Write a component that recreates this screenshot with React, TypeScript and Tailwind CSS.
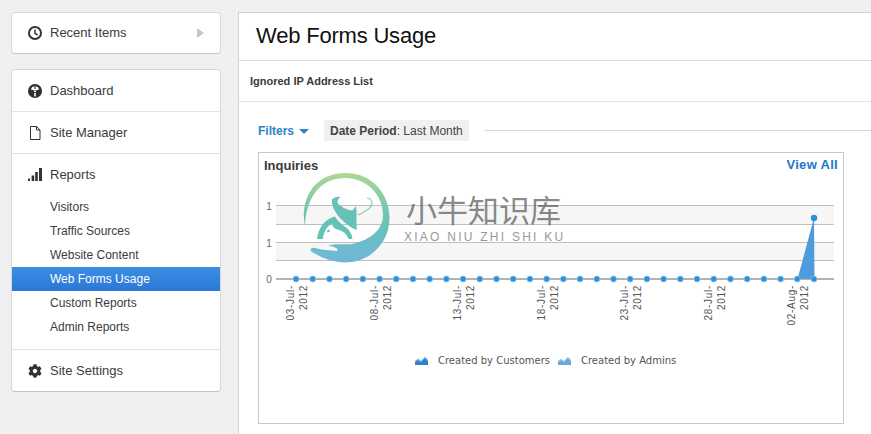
import { FaCog } from "react-icons/fa";

const subItems = ["Visitors", "Traffic Sources", "Website Content", "Web Forms Usage", "Custom Reports", "Admin Reports"];
const dates = ["03-Jul-", "08-Jul-", "13-Jul-", "18-Jul-", "23-Jul-", "28-Jul-", "02-Aug-"];
const points = Array.from({ length: 32 }, (_, i) => 296 + i * 16.71);

function ClockIcon() {
  return (
    <svg width="14" height="14" viewBox="0 0 14 14" fill="none" stroke="#333">
      <circle cx="7" cy="7" r="6" strokeWidth="2" />
      <path d="M7 3.4V7.4L9.6 9" strokeWidth="1.5" />
    </svg>
  );
}

function DashboardIcon() {
  return (
    <svg width="14" height="14" viewBox="0 0 14 14">
      <circle cx="7" cy="7" r="7" fill="#2e2e2e" />
      <path d="M3 5.4C3.4 3.4 5 2.2 7 2.2s3.6 1.2 4 3.2L8.4 6.2H5.6Z" fill="#fff" />
      <path d="M6.5 2h1L7.6 5H6.4Z" fill="#2e2e2e" />
      <rect x="6" y="6.6" width="2" height="1.5" fill="#fff" />
      <rect x="6.2" y="9" width="1.6" height="3.4" fill="#fff" />
    </svg>
  );
}

function FileIcon() {
  return (
    <svg width="14" height="14" viewBox="0 0 14 14" fill="none" stroke="#333" strokeWidth="1">
      <path d="M2.5.5H8.5L12 4V13.5H2.5Z" />
      <path d="M8.5.5V4H12" />
    </svg>
  );
}

function BarsIcon() {
  return (
    <svg width="14" height="13" viewBox="0 0 14 13" fill="#333">
      <rect x="0" y="10.5" width="2" height="2.5" />
      <rect x="3.6" y="7.5" width="2.6" height="5.5" />
      <rect x="7.2" y="4" width="2.6" height="9" />
      <rect x="11" y="0" width="3" height="13" />
    </svg>
  );
}

function LegendIcon({ color }: { color: string }) {
  return (
    <svg width="13" height="8" viewBox="0 0 13 8">
      <path d="M0 8V4l3-2 3 2 4-4 3 3v5z" fill={color} />
      <path d="M0 5l3-2 3 2 4-4 3 3" fill="none" stroke="#fff" strokeOpacity="0.35" />
    </svg>
  );
}

function Row({ icon, label }: { icon: React.ReactNode; label: string }) {
  return (
    <div className="flex h-[41px] items-center pl-[16px] text-[13px] text-[#3b3b3b]">
      <span className="flex w-[22px] justify-start">{icon}</span>
      {label}
    </div>
  );
}

function Chart() {
  return (
    <svg width="584" height="244" viewBox="259 179 584 244" className="block">
      <rect x="276" y="205" width="558" height="19" fill="#f6f6f6" />
      <rect x="276" y="242" width="558" height="18" fill="#f6f6f6" />
      {[205, 224, 242, 260].map((y) => (
        <line key={y} x1="276" x2="834" y1={y + 0.5} y2={y + 0.5} stroke="#bfbfbf" />
      ))}
      <line x1="276" x2="834" y1="279" y2="279" stroke="#999" strokeWidth="1.5" />
      {[["1", 206], ["1", 243], ["0", 279]].map(([t, y]) => (
        <text key={y} x="269" y={Number(y) + 3.5} textAnchor="middle" fontSize="10" fill="#666" fontFamily="Liberation Sans, sans-serif">
          {t}
        </text>
      ))}
      <path d="M797.5 279 814 218 814.5 279z" fill="#4f9bdc" />
      {points.map((x, i) => (
        <circle key={i} cx={x} cy="279" r="3" fill="#2f8fd8" stroke="#8cc4ee" strokeWidth="0.8" />
      ))}
      <circle cx="814" cy="218" r="3.2" fill="#2f8fd8" />
      {dates.map((d, i) => {
        const x = 296 + i * 83.55;
        return (
          <g key={d} fontSize="10" fill="#555" fontFamily="Liberation Sans, sans-serif" letterSpacing="0.7" textAnchor="end">
            <text transform={`translate(${x - 2},285) rotate(-90)`}>{d}</text>
            <text transform={`translate(${x + 11},285) rotate(-90)`}>2012</text>
          </g>
        );
      })}
      <g transform="translate(415,357)">
        <LegendIcon color="#2f80c8" />
      </g>
      <text x="438" y="364" fontSize="10" fill="#555" fontFamily="DejaVu Sans, sans-serif">Created by Customers</text>
      <g transform="translate(558,357)">
        <LegendIcon color="#6ea6d6" />
      </g>
      <text x="581" y="364" fontSize="10" fill="#555" fontFamily="DejaVu Sans, sans-serif">Created by Admins</text>
    </svg>
  );
}

function Watermark() {
  return (
    <div className="pointer-events-none absolute left-[295px] top-[165px] h-[105px] w-[280px]">
      <svg width="100" height="100" viewBox="295 165 100 100" className="absolute left-0 top-0">
        <defs>
          <linearGradient id="wm" x1="0" y1="0" x2="0" y2="1">
            <stop offset="0" stopColor="#aed892" />
            <stop offset="0.5" stopColor="#68c4b4" />
            <stop offset="1" stopColor="#71b6da" />
          </linearGradient>
        </defs>
        <path
          fill="url(#wm)"
          d="M305 226C300 205 310 173 346 173C372 173 389.5 194 389.5 218C389.5 243 370 262.5 345 262.5C333 262.5 322 258 312 252C309 250 311 247 315 248C322 250 330 250 337 251C339 249 334 246 328 246C335 243 345 245 352 244C370 240 383 230 383 215C383 195 367 178 345 178C320 178 306 198 305 226Z"
        />
        <path
          fill="#66c1b8"
          d="M332 199.5C335 197 338 196.5 340.5 197C337 199 336 204 341 206C345 209 350 211 353 210L356 206L356.7 213C356 219 357 225 356.7 230C351 228 345 223 341 219C336 214 331 206 332 199.5Z"
        />
        <path
          fill="#66c1b8"
          d="M317 239C318 229 324 219 335 216.5C337 220 340 223 344 226C349 229 352 234 352.5 239L348.5 239C347 234 343 231 339 230C335 229 331 226 333 223.5C328 225 324 230 323 239Z"
        />
        <circle cx="328.5" cy="231" r="1.3" fill="#66c1b8" />
        <path d="M358 215C364 212 373 208 372 202C371 199 369 198 367 198" fill="none" stroke="#8fcfb0" strokeWidth="1.2" />
      </svg>
      <div className="absolute left-[111px] top-[22px] whitespace-nowrap text-[31px] leading-[44px] text-[#555]/70 [font-family:'Noto_Sans_CJK_SC',sans-serif]">
        小牛知识库
      </div>
      <div className="absolute left-[109px] top-[65px] whitespace-nowrap text-[12px] leading-[14px] tracking-[2.25px] text-[#999] [font-family:'Liberation_Sans',sans-serif]">
        XIAO NIU ZHI SHI KU
      </div>
    </div>
  );
}

export default function App() {
  return (
    <div className="relative flex h-[434px] w-[871px] gap-[17px] overflow-hidden bg-[#eff0f1] pl-[11px] pt-3 [font-family:'Liberation_Sans',Arial,sans-serif]">
      <aside className="flex w-[210px] shrink-0 flex-col gap-[15px]">
        <div className="flex h-[42px] items-center justify-between rounded-[4px] border border-[#d6d6d6] border-b-[#c4c4c4] bg-white pr-[16px]">
          <Row icon={<ClockIcon />} label="Recent Items" />
          <span className="h-0 w-0 border-y-[5px] border-l-[7px] border-y-transparent border-l-[#c6c6c6]" />
        </div>
        <nav className="flex flex-col rounded-[4px] border border-[#d6d6d6] border-b-[#c4c4c4] bg-white">
          <Row icon={<DashboardIcon />} label="Dashboard" />
          <div className="border-t border-[#e3e3e3]">
            <Row icon={<FileIcon />} label="Site Manager" />
          </div>
          <div className="border-t border-[#e3e3e3]">
            <Row icon={<BarsIcon />} label="Reports" />
          </div>
          <ul className="mt-[-1px] pb-[10px] pt-[1px] text-[12px] text-[#3b3b3b]">
            {subItems.map((s) =>
              s === "Web Forms Usage" ? (
                <li key={s} className="flex h-[24px] items-center bg-gradient-to-b from-[#3b8ee4] to-[#2b78d6] pl-[38px] text-white">
                  {s}
                </li>
              ) : (
                <li key={s} className="flex h-[24px] items-center pl-[38px]">
                  {s}
                </li>
              ),
            )}
          </ul>
          <div className="border-t border-[#e3e3e3]">
            <Row icon={<FaCog size={14} color="#333" />} label="Site Settings" />
          </div>
        </nav>
      </aside>

      <main className="flex min-w-0 flex-1 flex-col border-l border-t border-[#d2d2d2] bg-white">
        <h1 className="flex h-[48px] shrink-0 items-center border-b border-[#dcdcdc] pb-[2px] pl-[17px] text-[22px] tracking-[-0.2px] text-[#111]">
          Web Forms Usage
        </h1>
        <div className="flex h-[41px] shrink-0 items-center border-b border-[#e4e4e4] pl-[11px] text-[11px] font-bold text-[#3a3a3a]">
          Ignored IP Address List
        </div>
        <div className="flex items-center pl-[19px] pt-[18px]">
          <span className="text-[12px] font-bold text-[#2b84cc]">Filters</span>
          <span className="ml-[5px] mt-[1px] h-0 w-0 border-x-[5px] border-t-[5px] border-x-transparent border-t-[#2b84cc]" />
          <span className="ml-[15px] flex h-[21px] items-center bg-[#f0f0f0] px-[6px] text-[12px] text-[#444]">
            <b>Date Period</b>: Last Month
          </span>
          <span className="ml-[16px] flex-1 border-t border-[#d4d4d4]" />
        </div>
        <section className="ml-[19px] mt-[11px] w-[586px] border border-[#c8c8c8]">
          <div className="flex h-[26px] items-start justify-between px-[5px] pt-[5px] text-[13px] font-bold leading-[15px]">
            <span className="text-[#3a3a3a]">Inquiries</span>
            <span className="-mt-px tracking-[0.3px] text-[#2077c8]">View All</span>
          </div>
          <Chart />
        </section>
      </main>
      <Watermark />
    </div>
  );
}
